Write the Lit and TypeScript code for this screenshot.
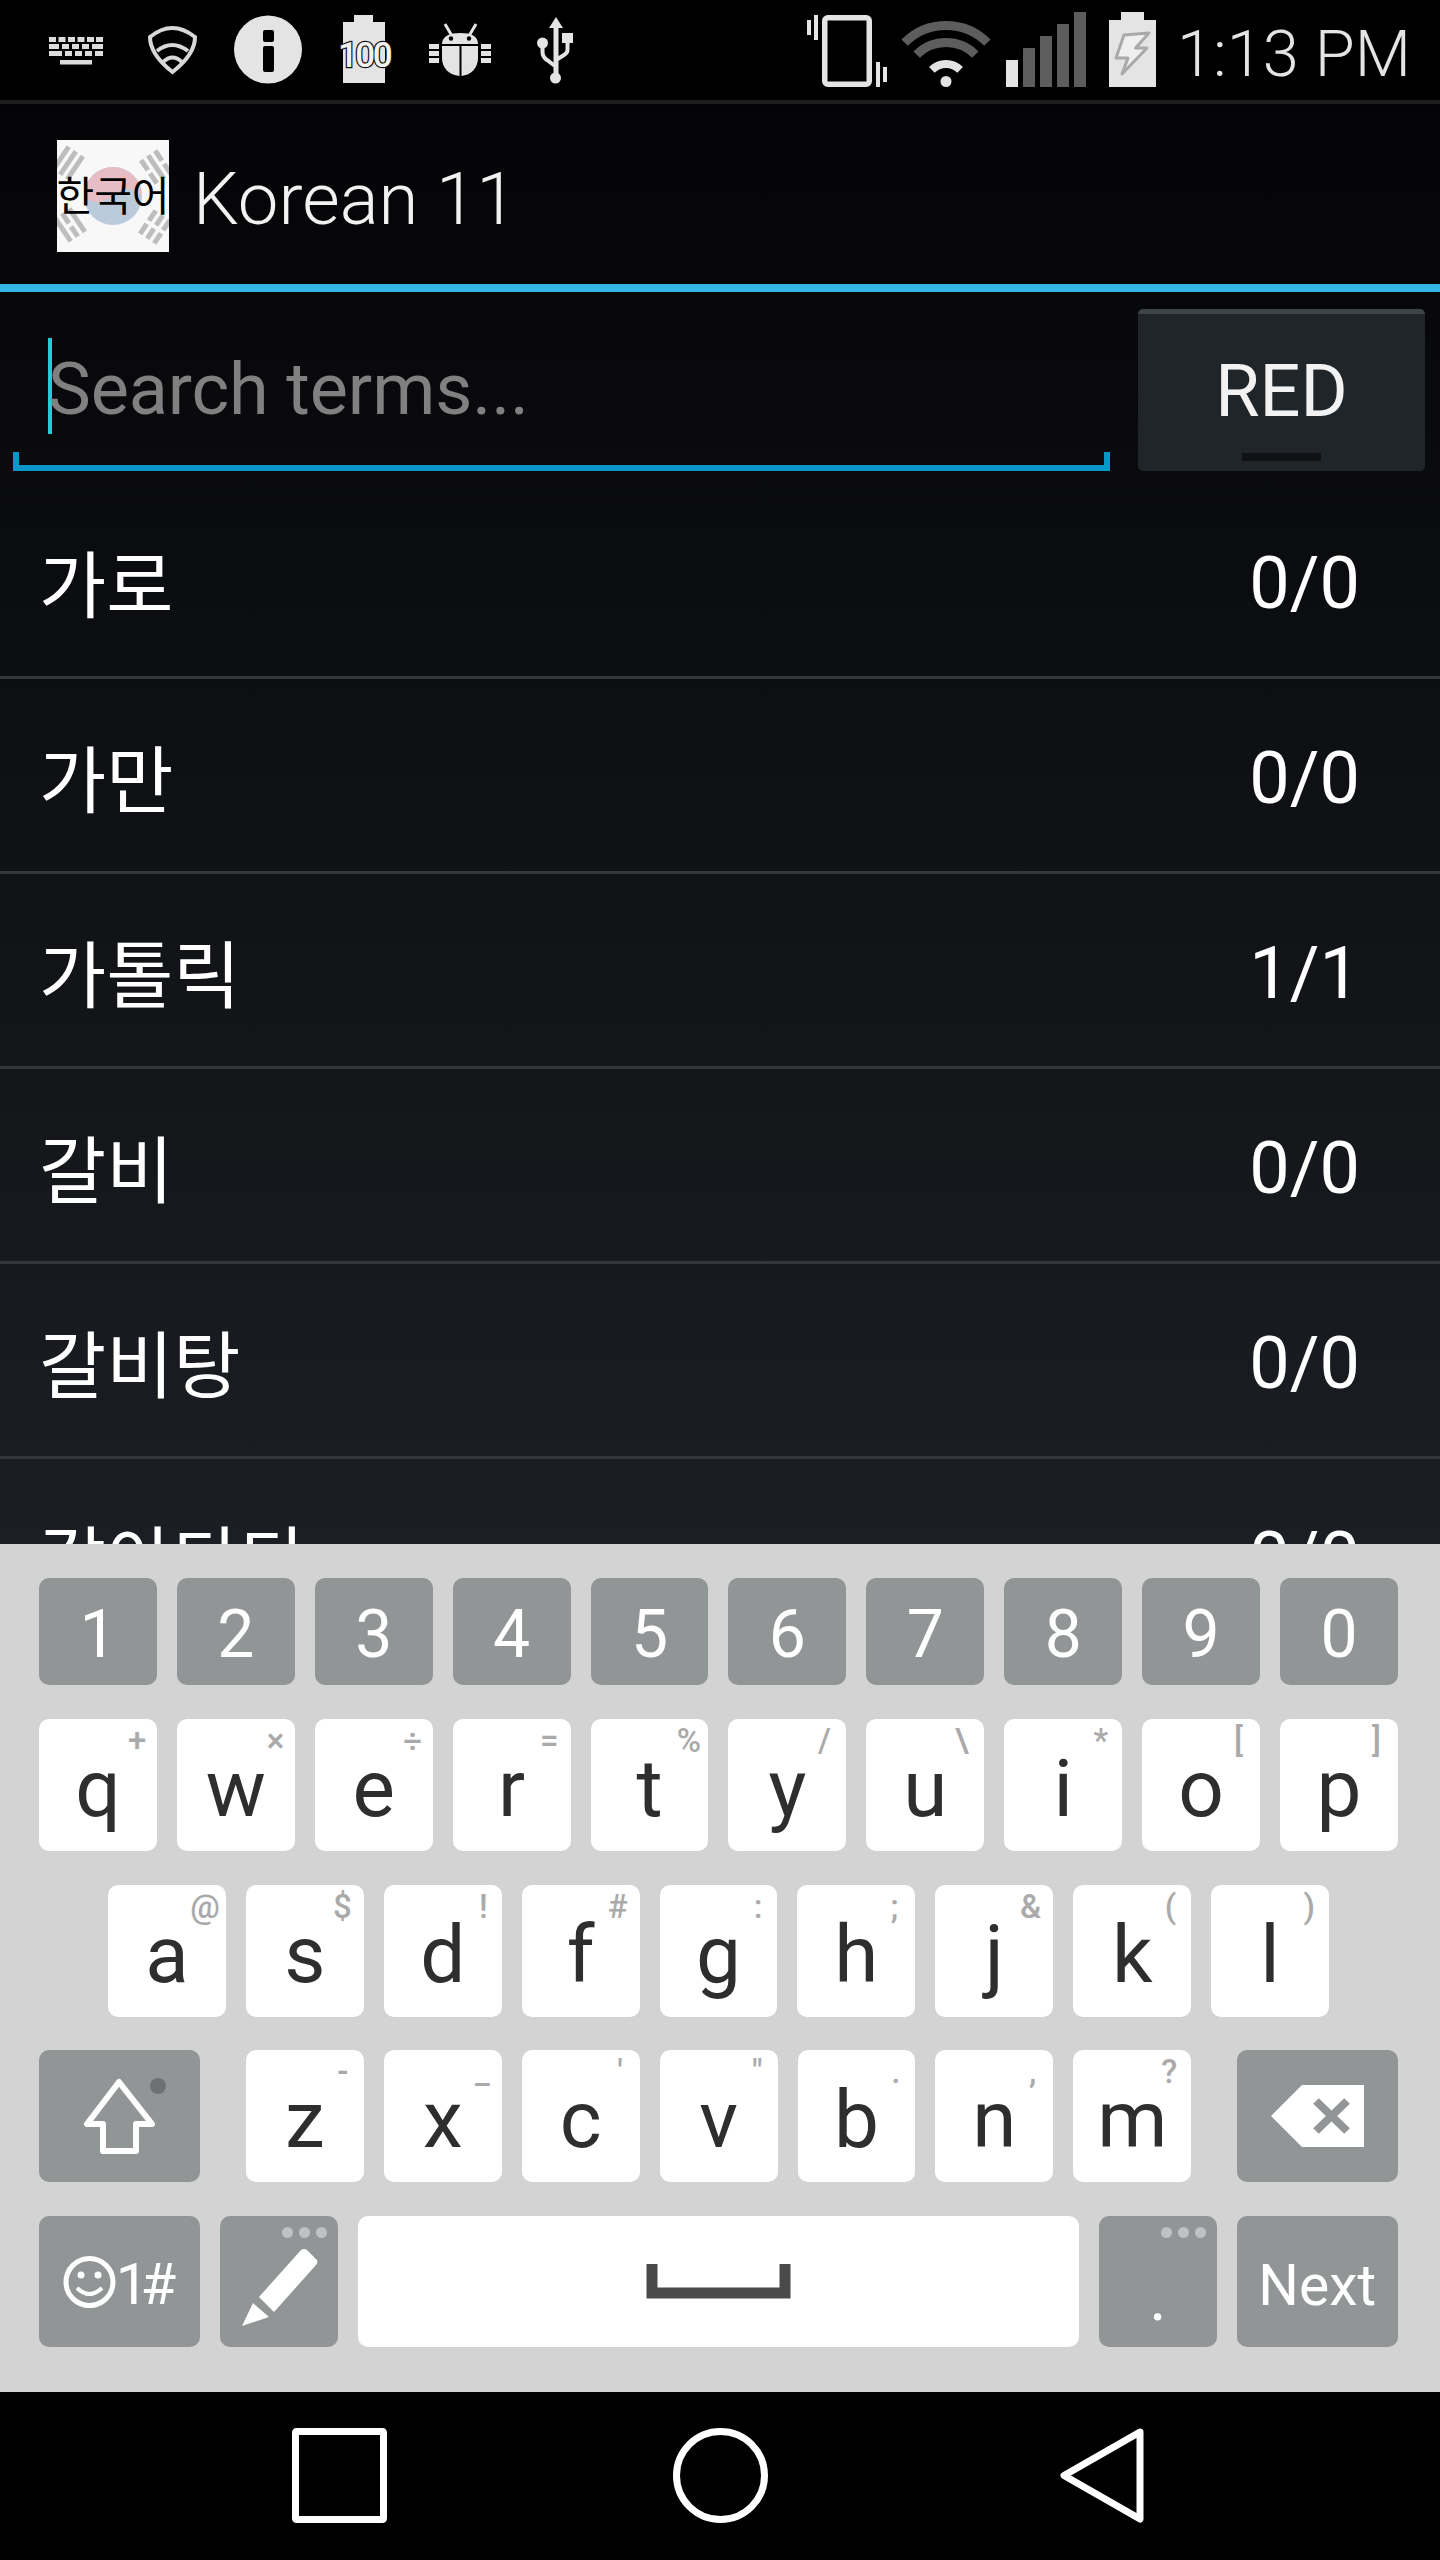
import { LitElement, html, css, svg } from 'lit';
import { customElement } from 'lit/decorators.js';

// r = distance of the hint glyph from the right edge of its key
type Key = { t: string; h?: string; r?: number };

const NUMBERS = ['1', '2', '3', '4', '5', '6', '7', '8', '9', '0'];
const ROW_Q: Key[] = [
  { t: 'q', h: '+', r: 10.5 }, { t: 'w', h: '×', r: 10.5 }, { t: 'e', h: '÷', r: 10.5 }, { t: 'r', h: '=', r: 12 }, { t: 't', h: '%', r: 7.5 },
  { t: 'y', h: '/', r: 15.5 }, { t: 'u', h: '\\', r: 15.5 }, { t: 'i', h: '*', r: 14 }, { t: 'o', h: '[', r: 17 }, { t: 'p', h: ']', r: 17 },
];
const ROW_A: Key[] = [
  { t: 'a', h: '@', r: 6 }, { t: 's', h: '$', r: 12 }, { t: 'd', h: '!', r: 14 }, { t: 'f', h: '#', r: 12 }, { t: 'g', h: ':', r: 15 },
  { t: 'h', h: ';', r: 17 }, { t: 'j', h: '&', r: 12 }, { t: 'k', h: '(', r: 15 }, { t: 'l', h: ')', r: 14 },
];
const ROW_Z: Key[] = [
  { t: 'z', h: '-', r: 15.5 }, { t: 'x', h: '_', r: 12 }, { t: 'c', h: "'", r: 17 }, { t: 'v', h: '"', r: 15 },
  { t: 'b', h: '.', r: 15 }, { t: 'n', h: ',', r: 17 }, { t: 'm', h: '?', r: 14 },
];

const TERMS = [
  ['가로', '0/0'],
  ['가만', '0/0'],
  ['가톨릭', '1/1'],
  ['갈비', '0/0'],
  ['갈비탕', '0/0'],
  ['갈아타다', '0/0'],
];

@customElement('app-root')
export class AppRoot extends LitElement {
  static styles = css`
    :host {
      display: block;
      width: 1440px;
      height: 2560px;
      overflow: hidden;
      background: #000;
      font-family: Roboto, 'Noto Sans CJK KR', sans-serif;
    }

    /* status bar */
    .status {
      display: flex;
      justify-content: space-between;
      height: 100px;
      border-bottom: 4px solid #1e1e1e;
      background: #000;
    }
    .status svg {
      display: block;
      overflow: visible;
    }
    .status-left {
      display: flex;
      padding-left: 49px;
    }
    .status-right {
      display: flex;
      padding-right: 36px;
    }
    .status-right svg:last-of-type {
      margin-right: -3px;
    }
    .time {
      width: 227px;
      margin-top: 4px;
      color: #e4e4e4;
      font-size: 65px;
      font-weight: 300;
      line-height: 100px;
      text-align: right;
      white-space: nowrap;
    }

    /* app area */
    .app {
      height: 1440px;
      overflow: hidden;
      background: linear-gradient(#040406, #1b1e23);
    }
    .action-bar {
      display: flex;
      align-items: center;
      height: 180px;
      padding-left: 57px;
      border-bottom: 8px solid #33b5e5;
    }
    .logo {
      display: block;
      width: 112px;
      height: 112px;
      margin-top: 4px;
    }
    .title {
      margin: 10px 0 0 24px;
      color: #f2f2f2;
      font-size: 72.5px;
      font-weight: 300;
    }
    .search {
      display: flex;
      height: 192px;
      padding: 17px 15px 0 13px;
      box-sizing: border-box;
    }
    .field {
      position: relative;
      display: flex;
      align-items: center;
      flex: 1;
      height: 162px;
      padding-left: 35px;
      box-sizing: border-box;
      border-bottom: 6px solid #0a96c8;
    }
    .field::before,
    .field::after {
      content: '';
      position: absolute;
      bottom: 0;
      width: 6px;
      height: 13px;
      background: #0a96c8;
    }
    .field::before {
      left: 0;
    }
    .field::after {
      right: 0;
    }
    .caret {
      width: 4px;
      height: 96px;
      margin: -3px -4px 0 0;
      background: #22ccd8;
    }
    .placeholder {
      margin-top: 4px;
      color: #808080;
      font-size: 72px;
      letter-spacing: -0.1px;
    }
    .red {
      position: relative;
      display: flex;
      align-items: center;
      justify-content: center;
      width: 287px;
      height: 162px;
      margin-left: 28px;
      padding-bottom: 2px;
      box-sizing: border-box;
      border-top: 5px solid #3e4347;
      border-radius: 5px;
      background: #20252a;
      color: #f2f2f2;
      font-size: 72px;
    }
    .red::after {
      content: '';
      position: absolute;
      left: 104px;
      bottom: 10px;
      width: 79px;
      height: 8px;
      background: #0f1114;
    }
    .row {
      display: flex;
      align-items: center;
      justify-content: space-between;
      height: 195px;
      padding: 0 80px 0 39px;
      box-sizing: border-box;
      border-bottom: 3px solid #33363a;
      color: #fff;
      font-size: 73px;
    }
    .count {
      margin-top: 6px;
      font-size: 72px;
    }

    /* keyboard */
    .keyboard {
      display: flex;
      flex-direction: column;
      gap: 34px;
      height: 848px;
      padding: 34px 0 0 39px;
      box-sizing: border-box;
      background: #d3d3d3;
    }
    .kb-row {
      display: flex;
      gap: 20px;
      height: 132px;
    }
    .kb-row.numbers {
      height: 107px;
    }
    .kb-row.home {
      margin-bottom: -1px;
      padding-left: 69px;
    }
    .kb-row.bottom {
      height: 131px;
    }
    .key {
      position: relative;
      display: flex;
      align-items: center;
      justify-content: center;
      flex: none;
      width: 117.9px;
      padding-top: 8px;
      box-sizing: border-box;
      border-radius: 10px;
      background: #fff;
      color: #2e2e2e;
      font-size: 80px;
      line-height: 1;
    }
    .key.fn {
      background: #929596;
      color: #fff;
    }
    .numbers .key {
      padding-top: 6px;
      font-size: 66px;
    }
    .key.wide {
      width: 161px;
    }
    .key.shift {
      margin-right: 26px;
    }
    .key.del {
      margin-left: 26px;
    }
    .key.space {
      width: 721px;
    }
    .key svg {
      position: absolute;
      inset: 0;
      display: block;
    }
    .hint {
      position: absolute;
      top: 5px;
      color: #aaa;
      font-size: 33px;
      font-weight: 500;
      line-height: 1;
    }
    .symbols {
      padding: 4px 0 0 45px;
      font-size: 58px;
      letter-spacing: -8px;
    }
    .next {
      padding-top: 8px;
      font-size: 57px;
    }
    .period {
      font-size: 66px;
      padding-top: 32px;
    }
    .dots {
      position: absolute;
      top: 11px;
      right: 11px;
      display: flex;
      gap: 6px;
    }
    .dots i {
      width: 11px;
      height: 11px;
      border-radius: 50%;
      background: #bfc1c2;
    }

    /* nav bar */
    .nav {
      display: flex;
      justify-content: center;
      height: 168px;
      background: #000;
    }
    .nav svg {
      display: block;
    }
  `;

  private _renderStatusLeft() {
    const kbRow = (y: number, xs: number[][]) =>
      xs.map(([x, w]) => svg`<rect x=${x} y=${y} width=${w} height="5" />`);
    return html`
      <div class="status-left">
        <svg width="99" height="100" viewBox="0 0 99 100" fill="#dcdcdc">
          ${kbRow(37, [[0, 7], [9.5, 7], [19, 7], [28.5, 7], [38, 7], [47, 7]])}
          ${kbRow(44, [[0, 10], [13, 7], [23, 7], [33, 7], [43, 11]])}
          ${kbRow(51, [[0, 13], [16, 7], [26, 7], [36, 7], [46, 8]])}
          <rect x="11" y="60" width="32" height="4.5" />
        </svg>
        <svg width="86" height="100" viewBox="0 0 86 100" fill="none" stroke="#d8d8d8" stroke-width="4">
          <path d="M2 37Q24 19 47 37C47 50 36 63 24.5 72C13 63 2 50 2 37Z" />
          <path d="M9 51Q24 39 40 51" />
          <path d="M15 62Q24.5 53 34 62" />
        </svg>
        <svg width="108" height="100" viewBox="0 0 108 100">
          <circle cx="34" cy="49.5" r="34" fill="#e4e4e4" />
          <rect x="29" y="30" width="11" height="12" rx="2" fill="#000" />
          <rect x="29" y="46" width="11" height="26" rx="2" fill="#000" />
        </svg>
        <svg width="87" height="100" viewBox="0 0 87 100">
          <path d="M12 15H31V22H43V83H1V22H12Z" fill="#e4e4e4" />
          <text
            x="22"
            y="67"
            text-anchor="middle"
            font-family="Roboto"
            font-size="35"
            font-weight="500"
            letter-spacing="-2.5"
            fill="#f2f2f2"
            stroke="#111"
            stroke-width="2.5"
            paint-order="stroke"
          >100</text>
        </svg>
        <svg width="108" height="100" viewBox="0 0 108 100" fill="#e4e4e4">
          <path d="M16 24L23 36M47 24L40 36" stroke="#e4e4e4" stroke-width="3" />
          <path d="M13 44C13 36 21 33 31.5 33C42 33 49 36 49 44Z" />
          <path d="M13 46H30.5V76C20 75 13 68 13 58Z" />
          <path d="M32.5 46H49V58C49 68 42 75 32.5 76Z" />
          <circle cx="22" cy="38.5" r="2.2" fill="#000" />
          <circle cx="40" cy="38.5" r="2.2" fill="#000" />
          <rect x="0" y="44" width="10" height="5" />
          <rect x="0" y="51" width="10" height="5" />
          <rect x="0" y="58" width="10" height="5" />
          <rect x="52" y="44" width="10" height="5" />
          <rect x="52" y="51" width="10" height="5" />
          <rect x="52" y="58" width="10" height="5" />
        </svg>
        <svg width="40" height="100" viewBox="0 0 40 100" fill="#e4e4e4">
          <path d="M19 17L26 28H12Z" />
          <rect x="16.5" y="27" width="5" height="48" />
          <circle cx="5.5" cy="43" r="5.5" />
          <circle cx="18.5" cy="78" r="5.5" />
          <rect x="25" y="33" width="11" height="10" />
          <path d="M5.5 46V52Q5.5 57 10 60L18 66" fill="none" stroke="#e4e4e4" stroke-width="4" />
          <path d="M30.5 42V50Q30.5 53 27 55L19 60" fill="none" stroke="#e4e4e4" stroke-width="4" />
        </svg>
      </div>
    `;
  }

  private _renderStatusRight() {
    const bars = [60, 48, 36, 24, 12];
    return html`
      <div class="status-right">
        <svg width="95" height="100" viewBox="0 0 95 100" fill="#e4e4e4">
          <rect x="0" y="20" width="4" height="15" />
          <rect x="7" y="15" width="4" height="25" />
          <rect x="17.75" y="17.75" width="44.5" height="66.5" rx="3" fill="none" stroke="#e4e4e4" stroke-width="5.5" />
          <rect x="69" y="62" width="4" height="25" />
          <rect x="76" y="67" width="4" height="15" />
        </svg>
        <svg width="104" height="100" viewBox="0 0 104 100" fill="none" stroke="#5d5d5d">
          <path d="M2.63 42.63A58.5 58.5 0 0 1 85.37 42.63" stroke-width="9" />
          <path d="M14.66 54.66A41.5 41.5 0 0 1 73.34 54.66" stroke-width="9" />
          <path d="M29.86 69.86A20 20 0 0 1 58.14 69.86" stroke="#e4e4e4" stroke-width="8" />
          <circle cx="44" cy="81.5" r="5.5" fill="#e4e4e4" stroke="none" />
        </svg>
        <svg width="103" height="100" viewBox="0 0 103 100">
          ${bars.map(
            (y, i) => svg`<rect x=${i * 17} y=${y} width="12" height=${87 - y} fill=${i === 0 ? '#e4e4e4' : '#5d5d5d'} />`
          )}
        </svg>
        <svg width="71" height="100" viewBox="0 0 71 100">
          <path d="M12 12H35V20H47V87H0V20H12Z" fill="#e4e4e4" />
          <path d="M40 33L15 35L7 58H19L13 74L38 48H26.5Z" fill="#efefef" stroke="#a9a9a9" stroke-width="3" stroke-linejoin="round" />
        </svg>
        <div class="time">1:13 PM</div>
      </div>
    `;
  }

  private _renderLogo() {
    const solid = (y: number) => svg`<rect x="-14" y=${y} width="28" height="5" />`;
    const broken = (y: number) => svg`<rect x="-14" y=${y} width="12" height="5" /><rect x="2" y=${y} width="12" height="5" />`;
    return html`
      <svg class="logo" viewBox="0 0 112 112">
        <rect width="112" height="112" fill="#f8f8f8" />
        <circle cx="56" cy="56" r="29" fill="#bccbdc" />
        <path d="M27 56A29 29 0 0 1 85 56C76 46 66 48 56 56C46 64 34 64 27 56Z" fill="#e6bcc5" />
        <g fill="#bdbdbd">
          <g transform="translate(11 23) rotate(-56)">${solid(-11)}${solid(-2.5)}${solid(6)}</g>
          <g transform="translate(99 27) rotate(56)">${broken(-11)}${solid(-2.5)}${broken(6)}</g>
          <g transform="translate(13 85) rotate(56)">${solid(-11)}${broken(-2.5)}${solid(6)}</g>
          <g transform="translate(98 87) rotate(-56)">${broken(-11)}${broken(-2.5)}${broken(6)}</g>
        </g>
        <text
          x="56"
          y="71"
          text-anchor="middle"
          font-family="'Noto Sans CJK KR', sans-serif"
          font-size="41"
          fill="#000"
        >한국어</text>
      </svg>
    `;
  }

  private _renderKey(k: Key) {
    return html`<div class="key">${k.t}<span class="hint" style="right:${k.r}px">${k.h}</span></div>`;
  }

  render() {
    return html`
      <div class="status">${this._renderStatusLeft()}${this._renderStatusRight()}</div>

      <div class="app">
        <div class="action-bar">
          ${this._renderLogo()}
          <div class="title">Korean 11</div>
        </div>
        <div class="search">
          <div class="field">
            <span class="caret"></span>
            <span class="placeholder">Search terms...</span>
          </div>
          <div class="red">RED</div>
        </div>
        ${TERMS.map(
          ([term, count]) => html`
            <div class="row">
              <span>${term}</span>
              <span class="count">${count}</span>
            </div>
          `
        )}
      </div>

      <div class="keyboard">
        <div class="kb-row numbers">${NUMBERS.map((n) => html`<div class="key fn">${n}</div>`)}</div>
        <div class="kb-row">${ROW_Q.map((k) => this._renderKey(k))}</div>
        <div class="kb-row home">${ROW_A.map((k) => this._renderKey(k))}</div>
        <div class="kb-row">
          <div class="key fn wide shift">
            <svg width="161" height="132" viewBox="0 0 161 132">
              <path d="M80 32L48 74H64V101H97V74H113Z" fill="none" stroke="#fff" stroke-width="6" stroke-linejoin="round" />
              <circle cx="119" cy="36" r="8" fill="#6e7173" />
            </svg>
          </div>
          ${ROW_Z.map((k) => this._renderKey(k))}
          <div class="key fn wide del">
            <svg width="161" height="132" viewBox="0 0 161 132">
              <path d="M34 66L65 35H127V97H65Z" fill="#fff" />
              <path d="M79 51L110 81M110 51L79 81" stroke="#929596" stroke-width="8" />
            </svg>
          </div>
        </div>
        <div class="kb-row bottom">
          <div class="key fn wide symbols">
            <svg width="161" height="131" viewBox="0 0 161 131" fill="none" stroke="#fff">
              <circle cx="50.5" cy="66" r="23.5" stroke-width="5" />
              <circle cx="42" cy="59" r="3.5" fill="#fff" stroke="none" />
              <circle cx="59" cy="59" r="3.5" fill="#fff" stroke="none" />
              <path d="M38 72Q50.5 84 63 72" stroke-width="4" />
            </svg>
            1#
          </div>
          <div class="key fn">
            <svg width="118" height="131" viewBox="0 0 118 131">
              <path d="M39 81L81 34Q84 32 87 34L97 44Q98 47 96 49L54 96Z" fill="#fff" />
              <path d="M33 87L49 101L22 110Z" fill="#fff" />
            </svg>
            <span class="dots"><i></i><i></i><i></i></span>
          </div>
          <div class="key space">
            <svg width="721" height="131" viewBox="0 0 721 131">
              <path d="M294 48V77H427V48" fill="none" stroke="#4a4a4a" stroke-width="11" />
            </svg>
          </div>
          <div class="key fn period">.<span class="dots"><i></i><i></i><i></i></span></div>
          <div class="key fn wide next">Next</div>
        </div>
      </div>

      <div class="nav">
        <svg width="381" height="168" viewBox="0 0 381 168">
          <rect x="146.5" y="39.5" width="88" height="88" rx="1" fill="none" stroke="#fff" stroke-width="7" />
        </svg>
        <svg width="381" height="168" viewBox="0 0 381 168">
          <circle cx="190.5" cy="83.5" r="44" fill="none" stroke="#fff" stroke-width="7" />
        </svg>
        <svg width="381" height="168" viewBox="0 0 381 168">
          <path d="M229 40L153 83.5L229 127Z" fill="none" stroke="#fff" stroke-width="7" stroke-linejoin="round" />
        </svg>
      </div>
    `;
  }
}
